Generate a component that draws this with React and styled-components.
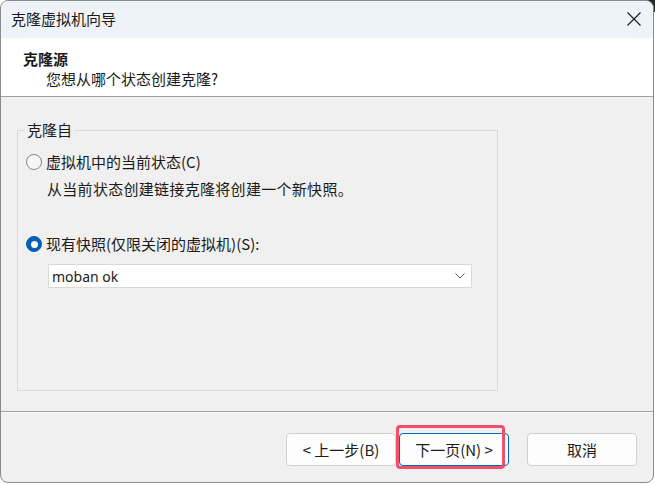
import React from "react";
import styled, { createGlobalStyle } from "styled-components";

const Global = createGlobalStyle`
  html {
    background: linear-gradient(#262626, #262626) right top / 176px 2px no-repeat,
      linear-gradient(#262626, #262626) right top / 12px 12px no-repeat, #ffffff;
  }
  body {
    margin: 0;
    font-family: "Noto Sans CJK SC", "Noto Sans", sans-serif;
    font-size: 15px;
    color: #1a1a1a;
  }
  * {
    box-sizing: border-box;
  }
`;

export default function App() {
  return (
    <>
      <Global />
      <Window>
        <TitleBar>
          <span>克隆虚拟机向导</span>
          <CloseIcon viewBox="0 0 14 14">
            <path d="M0.5 0.5 L13.5 13.5 M13.5 0.5 L0.5 13.5" />
          </CloseIcon>
        </TitleBar>
        <Header>
          <Heading>克隆源</Heading>
          <Sub>您想从哪个状态创建克隆?</Sub>
        </Header>
        <Body>
          <Group>
            <Legend>克隆自</Legend>
            <Option>
              <Radio />
              <span>虚拟机中的当前状态(C)</span>
            </Option>
            <Hint>从当前状态创建链接克隆将创建一个新快照。</Hint>
            <Option $gap={35}>
              <Radio $checked />
              <span>现有快照(仅限关闭的虚拟机)(S):</span>
            </Option>
            <Select>
              <span>moban ok</span>
              <Chevron viewBox="0 0 10 6">
                <path d="M0.5 0.5 L5 5 L9.5 0.5" />
              </Chevron>
            </Select>
          </Group>
        </Body>
        <Footer>
          <Button>&lt; 上一步(B)</Button>
          <Button $primary>
            下一页(N) &gt;
            <Highlight />
          </Button>
          <Button $spaced>取消</Button>
        </Footer>
      </Window>
    </>
  );
}

const Window = styled.div`
  width: 654px;
  height: 483px;
  border: 1px solid #8b8b8b;
  border-radius: 8px;
  overflow: hidden;
  display: flex;
  flex-direction: column;
  background: #f0f0f0;
`;

const TitleBar = styled.div`
  height: 37px;
  flex-shrink: 0;
  background: #eef3f9;
  display: flex;
  align-items: center;
  justify-content: space-between;
  padding: 0 12px 2px 10px;
  line-height: 20px;
`;

const CloseIcon = styled.svg`
  width: 14px;
  height: 14px;
  stroke: #1a1a1a;
  stroke-width: 1.1;
  fill: none;
`;

const Header = styled.div`
  background: #ffffff;
  padding: 11px 0 7px 22px;
  border-bottom: 1px solid #a0a0a0;
  line-height: 20px;
`;

const Heading = styled.div`
  font-weight: 700;
`;

const Sub = styled.div`
  padding-left: 23px;
`;

const Body = styled.div`
  height: 314px;
  flex-shrink: 0;
  padding: 23px 0 0 16px;
`;

const Group = styled.fieldset`
  width: 481px;
  height: 271px;
  margin: 0;
  padding: 12px 8px 0 8px;
  border: 1px solid #dadada;
  display: flex;
  flex-direction: column;
  align-items: flex-start;
`;

const Legend = styled.legend`
  margin-left: -1px;
  padding: 0 2px;
  line-height: 20px;
`;

const Option = styled.label`
  display: flex;
  align-items: center;
  gap: 4px;
  line-height: 20px;
  margin-top: ${(p) => p.$gap || 0}px;
`;

const Radio = styled.span`
  width: 16px;
  height: 16px;
  border-radius: 50%;
  flex-shrink: 0;
  border: 1px solid ${(p) => (p.$checked ? "#005fb8" : "#858585")};
  background: ${(p) => (p.$checked ? "#005fb8" : "#f6f6f6")};
  display: flex;
  align-items: center;
  justify-content: center;
  &::after {
    content: "";
    width: 7px;
    height: 7px;
    border-radius: 50%;
    background: #ffffff;
    display: ${(p) => (p.$checked ? "block" : "none")};
  }
`;

const Hint = styled.div`
  margin: 7px 0 0 21px;
  line-height: 20px;
  letter-spacing: 0.3px;
`;

const Select = styled.div`
  margin: 10px 0 0 22px;
  width: 424px;
  height: 24px;
  background: #ffffff;
  border: 1px solid #d9d9d9;
  display: flex;
  align-items: center;
  justify-content: space-between;
  padding: 0 6px 0 3px;
  font-family: "Noto Sans", "Noto Sans CJK SC", sans-serif;
  font-size: 14px;
`;

const Chevron = styled.svg`
  width: 10px;
  height: 6px;
  stroke: #5a5a5a;
  stroke-width: 1;
  fill: none;
`;

const Footer = styled.div`
  flex: 1;
  border-top: 1px solid #a0a0a0;
  box-shadow: inset 0 1px 0 #ffffff;
  display: flex;
  justify-content: flex-end;
  align-items: flex-start;
  padding: 21px 16px 0 0;
  gap: 3px;
`;

const Button = styled.button`
  position: relative;
  width: 110px;
  height: 33px;
  margin-left: ${(p) => (p.$spaced ? 15 : 0)}px;
  font-family: "Noto Sans CJK SC", "Noto Sans", sans-serif;
  font-size: 15px;
  color: #1a1a1a;
  background: #fdfdfd;
  border: 1px solid ${(p) => (p.$primary ? "#0067c0" : "#d0d0d0")};
  border-radius: 4px;
  padding: 0;
`;

const Highlight = styled.span`
  position: absolute;
  left: -4px;
  top: -9px;
  width: 109px;
  height: 44px;
  border: 3px solid #f0506a;
  border-radius: 4px;
  pointer-events: none;
`;
